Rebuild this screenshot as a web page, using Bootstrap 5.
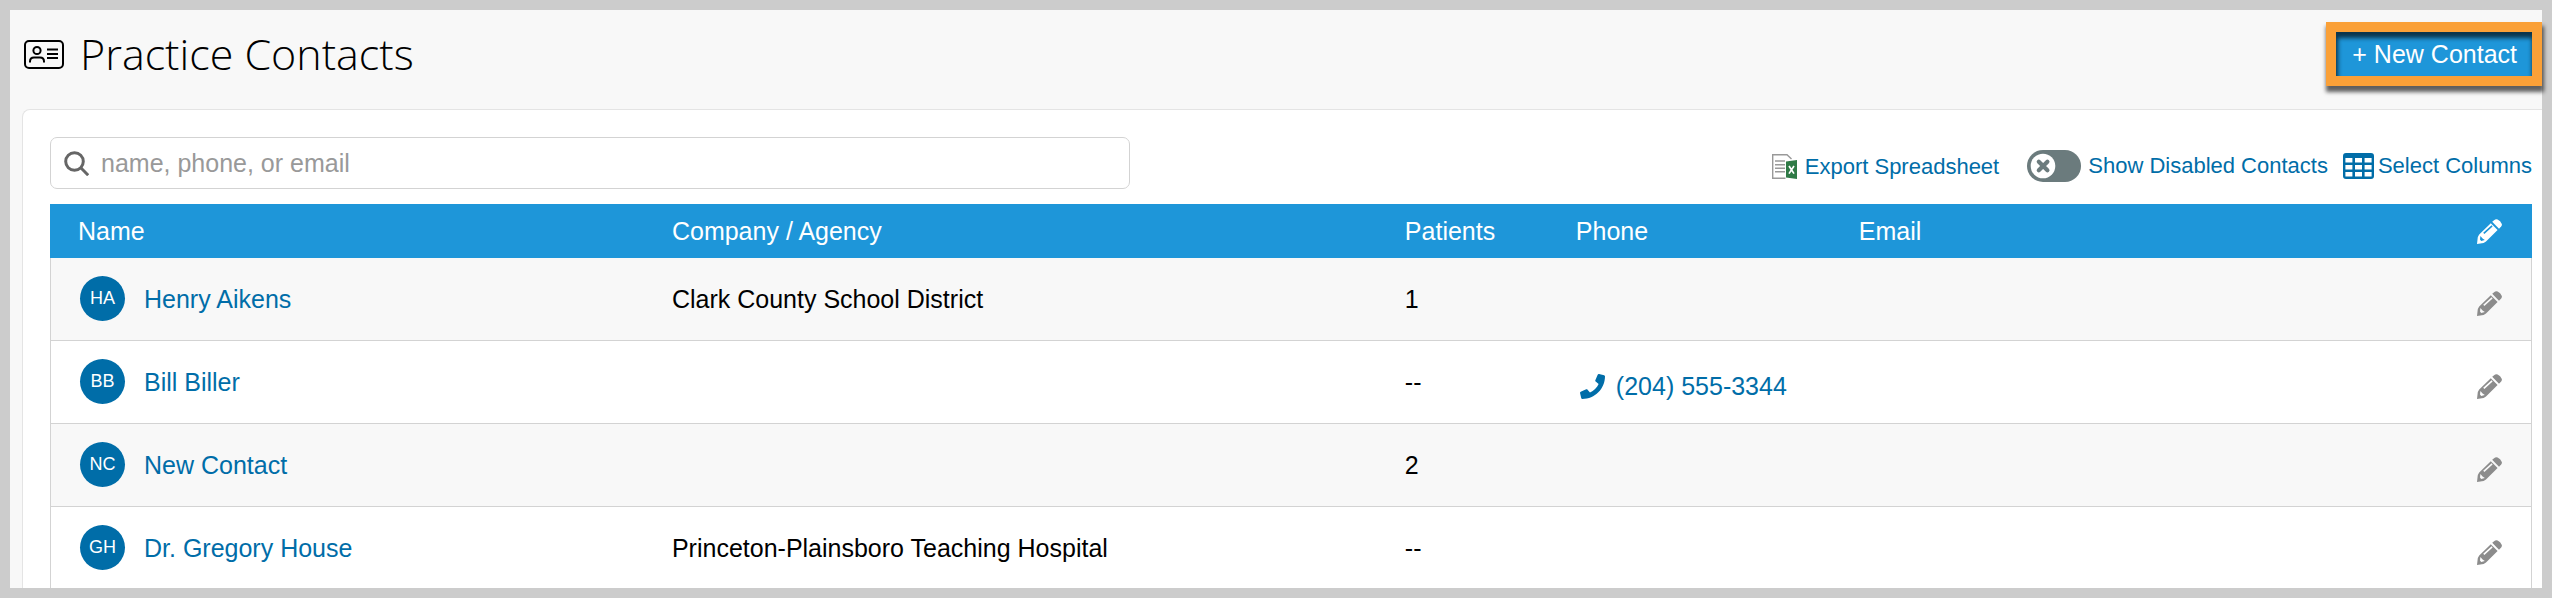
<!DOCTYPE html>
<html lang="en">
<head>
<meta charset="utf-8">
<meta name="viewport" content="width=device-width, initial-scale=1">
<title>Practice Contacts</title>
<link href="https://cdn.jsdelivr.net/npm/bootstrap@5.3.0/dist/css/bootstrap.min.css" rel="stylesheet">
<style>
  :root { --brand: #1e96d9; --brand-dark: #006da8; --line: #d3d3d3; --soft: #f8f8f8; }
  body { font-family: "Liberation Sans", Arial, sans-serif; font-size: 25px; line-height: 30px; color: #000; }
  a { color: var(--brand-dark); text-decoration: none; }
  svg { display: block; flex: none; }
  .app-frame { height: 100vh; padding: 10px; background: #ccc; }
  .app-page { background: var(--soft); min-height: 0; }
  .page-head { padding: 12px 0 23px 13px; }
  .page-title { font-family: "Open Sans", sans-serif; font-weight: 300; font-size: 43px; line-height: 60px; color: #000; }
  .head-group { gap: 16px; }
  .highlight { border: 10px solid #faa037; box-shadow: 1px 5px 4px 1px rgba(0,0,0,.62); }
  .btn-new { --bs-btn-color: #fff; --bs-btn-bg: var(--brand); --bs-btn-hover-color: #fff; --bs-btn-hover-bg: #1784c2;
    font-size: 25px; line-height: 44px; padding: 0 15px 0 16px; border: 0; border-radius: 0;
    box-shadow: inset 1px 5px 4px 1px rgba(0,0,0,.65); }
  .panel { margin-left: 12px; padding: 27px 10px 0 27px; background: #fff; border: 1px solid #e4e4e4; border-width: 1px 0 0 1px; border-top-left-radius: 8px; min-height: 0; }
  .toolbar { margin-bottom: 15px; }
  .search { width: 1080px; max-width: 45%; height: 52px; padding: 0 13px; border: 1px solid var(--line); border-radius: 7px; gap: 12px; }
  .search .form-control { font-size: 25px; line-height: 30px; padding: 0; border: 0; box-shadow: none; background: none; color: #000; }
  .search .form-control::placeholder { color: #999; }
  .tools { font-size: 22px; line-height: 26px; padding-top: 6px; }
  .tools a, .tools label { color: var(--brand-dark); }
  .tool-export { gap: 8px; margin-right: 28px; padding-top: 2px; }
  .tool-switch { gap: 7px; margin-right: 15px; }
  .tool-columns { gap: 4px; }
  .switch.form-check-input { width: 54px; height: 32px; margin: 0; border: 0; border-radius: 16px; background-color: #6b7b7d; background-size: 54px 32px; background-position: left center; background-repeat: no-repeat;
    background-image: url("data:image/svg+xml,%3Csvg xmlns='http://www.w3.org/2000/svg' viewBox='0 0 54 32'%3E%3Ccircle cx='16' cy='16' r='12.3' fill='%23fff'/%3E%3Cpath d='M11.8 11.8l8.6 8.4M20.4 11.8l-8.6 8.4' stroke='%236b7b7d' stroke-width='4.2' stroke-linecap='round'/%3E%3C/svg%3E"); }
  .contacts { table-layout: fixed; width: 100%; border-collapse: separate; border-spacing: 0; }
  .contacts th { height: 54px; padding: 0 0 0 28px; background: var(--brand); color: #fff; font-weight: 400; }
  .contacts td { height: 83px; padding: 0 0 0 28px; border-bottom: 1px solid var(--line); }
  .contacts td:first-child { border-left: 1px solid var(--line); padding-left: 29px; }
  .contacts td:last-child { border-right: 1px solid var(--line); color: #8c8c8c; }
  .contacts tbody tr:nth-child(odd) td { background: var(--soft); }
  .contacts .edit { padding: 0 30px 0 0; }
  .contacts td.edit { padding-right: 29px; }
  .edit button { display: block; margin-left: auto; padding: 0; border: 0; background: none; color: inherit; }
  .col-name { width: 23.93%; } .col-company { width: 29.53%; } .col-patients { width: 6.89%; } .col-phone { width: 11.4%; } .col-edit { width: 90px; }
  .person { gap: 19px; }
  .avatar { width: 45px; height: 45px; margin-bottom: 2px; flex: none; background: var(--brand-dark); color: #fff; font-size: 18px; line-height: 45px; text-align: center; }
  .phone { gap: 11px; }
  .contacts .phone-cell { padding-left: 32px; }
</style>
</head>
<body>
<svg width="0" height="0" class="position-absolute" aria-hidden="true">
  <symbol id="pencil" viewBox="0 0 25 25">
    <path fill="currentColor" fill-rule="evenodd" d="M0 25L.8 18 2.2 15.4 13.8 4.2 20.6 11 9 22.4 6.6 24ZM6.2 13.8 7.4 15 15.6 7.4 14.6 6.2ZM3.4 17 3 20.6 4.2 21.9 7.8 20.9 5.6 19.6Z"/>
    <path fill="currentColor" d="M15.2 2.8 17.4.9Q18.8-.3 20.6.5 23.6 2 24.7 4.8 25.3 6.4 24.2 7.5L22 9.7Z"/>
  </symbol>
</svg>
<div class="app-frame d-flex flex-column">
  <main class="app-page d-flex flex-column flex-fill">
    <header class="page-head d-flex align-items-center justify-content-between">
      <div class="head-group d-flex align-items-center">
        <svg width="41" height="30" viewBox="0 0 41 30" fill="none" stroke="#000" stroke-width="2" aria-hidden="true">
          <rect x="2" y="2" width="38" height="27" rx="4"/>
          <circle cx="14" cy="11.5" r="3.6"/>
          <path d="M7 23.5v-1q0-4 4-4h6q4 0 4 4v1M24 10.5h11M24 15h11M24 19h11"/>
        </svg>
        <h1 class="page-title mb-0">Practice Contacts</h1>
      </div>
      <div class="highlight"><button type="button" class="btn btn-new d-block">+ New Contact</button></div>
    </header>
    <section class="panel flex-fill overflow-hidden">
      <div class="toolbar d-flex align-items-center justify-content-between">
        <div class="search d-flex align-items-center">
          <svg width="25" height="25" viewBox="0 0 25 25" fill="none" stroke="#666" stroke-width="3" aria-hidden="true"><circle cx="10.5" cy="10.5" r="8.8"/><path d="M16.8 16.8l7.4 7.4"/></svg>
          <input type="text" class="form-control" placeholder="name, phone, or email" aria-label="Search contacts">
        </div>
        <div class="tools d-flex align-items-center">
          <a href="#" class="tool-export d-flex align-items-center">
            <svg width="25" height="26" viewBox="0 0 25 26" aria-hidden="true">
              <path d="M13.5 24.3H.7V.7H15L19.5 5" fill="none" stroke="#999" stroke-width="1.4"/>
              <path d="M3 7h10M3 10.7h10M3 14.2h10M3 17.8h10" stroke="#999" stroke-width="1.4"/>
              <path d="M14 7.5L25 6v19l-11-1.6z" fill="#2f7a46"/>
              <path d="M17 12l5 7.6M22 12l-5 7.6" stroke="#fff" stroke-width="1.7"/>
            </svg>
            <span>Export Spreadsheet</span>
          </a>
          <div class="tool-switch d-flex align-items-center">
            <input class="form-check-input switch" type="checkbox" role="switch" id="showDisabled">
            <label for="showDisabled">Show Disabled Contacts</label>
          </div>
          <a href="#" class="tool-columns d-flex align-items-center">
            <svg width="31" height="26" viewBox="0 0 31 26" aria-hidden="true"><path fill="#006da8" fill-rule="evenodd" d="M3 0h25q3 0 3 3v20q0 3-3 3H3q-3 0-3-3V3q0-3 3-3zM2.4 5v4.4h7V5zM12 5v4.4h7V5zM21.6 5v4.4h7V5zM2.4 12v4.4h7V12zM12 12v4.4h7V12zM21.6 12v4.4h7V12zM2.4 19v4.4h7V19zM12 19v4.4h7V19zM21.6 19v4.4h7V19z"/></svg>
            <span>Select Columns</span>
          </a>
        </div>
      </div>
      <table class="contacts">
        <colgroup><col class="col-name"><col class="col-company"><col class="col-patients"><col class="col-phone"><col><col class="col-edit"></colgroup>
        <thead>
          <tr><th scope="col">Name</th><th scope="col">Company / Agency</th><th scope="col">Patients</th><th scope="col">Phone</th><th scope="col">Email</th>
            <th class="edit"><button type="button" aria-label="Edit all"><svg width="25" height="25"><use href="#pencil"/></svg></button></th></tr>
        </thead>
        <tbody>
          <tr><td><div class="person d-flex align-items-center"><span class="avatar rounded-circle">HA</span><a href="#">Henry Aikens</a></div></td>
            <td>Clark County School District</td><td>1</td><td></td><td></td>
            <td class="edit"><button type="button" class="pt-2" aria-label="Edit Henry Aikens"><svg width="25" height="25"><use href="#pencil"/></svg></button></td></tr>
          <tr><td><div class="person d-flex align-items-center"><span class="avatar rounded-circle">BB</span><a href="#">Bill Biller</a></div></td>
            <td></td><td>--</td>
            <td class="phone-cell"><a href="#" class="phone d-flex align-items-center pt-2"><svg width="25" height="25" viewBox="0 0 512 512" aria-hidden="true"><path fill="currentColor" d="M493.4 24.6l-104-24c-11.3-2.6-22.9 3.3-27.5 13.9l-48 112c-4.2 9.8-1.4 21.3 6.9 28l60.6 49.6c-36 76.7-98.9 140.5-177.2 177.2l-49.6-60.6c-6.8-8.3-18.2-11.1-28-6.9l-112 48C3.9 366.5-2 378.1.6 389.4l24 104C27.1 504.2 36.7 512 48 512c256.1 0 464-207.5 464-464 0-11.2-7.7-20.9-18.6-23.4z"/></svg><span>(204) 555-3344</span></a></td>
            <td></td>
            <td class="edit"><button type="button" class="pt-2" aria-label="Edit Bill Biller"><svg width="25" height="25"><use href="#pencil"/></svg></button></td></tr>
          <tr><td><div class="person d-flex align-items-center"><span class="avatar rounded-circle">NC</span><a href="#">New Contact</a></div></td>
            <td></td><td>2</td><td></td><td></td>
            <td class="edit"><button type="button" class="pt-2" aria-label="Edit New Contact"><svg width="25" height="25"><use href="#pencil"/></svg></button></td></tr>
          <tr><td><div class="person d-flex align-items-center"><span class="avatar rounded-circle">GH</span><a href="#">Dr. Gregory House</a></div></td>
            <td>Princeton-Plainsboro Teaching Hospital</td><td>--</td><td></td><td></td>
            <td class="edit"><button type="button" class="pt-2" aria-label="Edit Dr. Gregory House"><svg width="25" height="25"><use href="#pencil"/></svg></button></td></tr>
        </tbody>
      </table>
    </section>
  </main>
</div>
<script src="https://cdn.jsdelivr.net/npm/bootstrap@5.3.0/dist/js/bootstrap.bundle.min.js"></script>
</body>
</html>
